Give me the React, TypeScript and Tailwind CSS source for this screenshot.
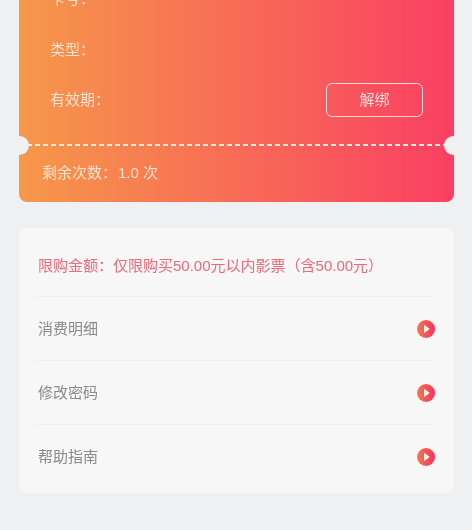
const font = { fontFamily: '"Liberation Sans", "Noto Sans CJK SC", sans-serif' };

function Arrow() {
  return (
    <svg width="18" height="18" viewBox="0 0 18 18" className="shrink-0">
      <defs>
        <linearGradient id="arrowGrad" x1="0" y1="0" x2="1" y2="0">
          <stop offset="0" stopColor="#ee7a50" />
          <stop offset="1" stopColor="#fb2f5e" />
        </linearGradient>
      </defs>
      <circle cx="9" cy="9" r="9" fill="url(#arrowGrad)" />
      <path d="M7 4.8 L12.8 9 L7 13.2 Z" fill="#fbeee8" />
    </svg>
  );
}

function Row({ label }: { label: string }) {
  return (
    <div className="flex h-[64px] items-center justify-between border-b border-[#f0f0f0] last:border-b-0">
      <span className="mt-[1px] text-[15px] text-[#8a8a8a]">{label}</span>
      <Arrow />
    </div>
  );
}

export default function App() {
  return (
    <div style={font} className="h-[530px] w-[472px] overflow-hidden bg-[#eef0f2] pl-[19px] blur-[0.4px]">
      <div className="relative -mt-[24px] h-[226px] w-[435px] overflow-hidden rounded-b-lg bg-linear-to-r/srgb from-[#f6984a] to-[#fa3f62] text-[#fbe3d2]">
        <div className="h-[168px] pl-[31px] pt-[11px] text-[15px]">
          <div className="flex h-[25px] items-center">卡号&#xFF1A;</div>
          <div className="mt-[26px] flex h-[25px] items-center">类型&#xFF1A;</div>
          <div className="mt-[25px] flex h-[24px] items-center justify-between pr-[31px]">
            <span>有效期&#xFF1A;</span>
            <button className="h-[34px] w-[97px] rounded-md border-[1.5px] border-[#fbdcd6] text-[15px] text-[#fbdcd6]">解绑</button>
          </div>
        </div>
        <div className="h-[1.5px] bg-[repeating-linear-gradient(90deg,#ffeee0_0,#ffeee0_5px,transparent_5px,transparent_8px)]" />
        <div className="flex h-[56px] items-center pl-[23px] text-[15px]">剩余次数&#xFF1A;<span className="ml-[1px]">1.0 次</span></div>
        <div className="absolute left-[-9px] top-[160px] h-[19px] w-[19px] rounded-full bg-[#eef0f2]" />
        <div className="absolute right-[-9px] top-[160px] h-[19px] w-[19px] rounded-full bg-[#eef0f2]" />
      </div>
      <div className="mt-[26px] w-[435px] rounded-lg bg-[#f7f7f7] px-[19px] pb-[4px]">
        <div className="flex h-[69px] items-start border-b border-[#f0f0f0] pt-[28px] text-[15px] leading-[20px] text-[#ea6b7c]">
          限购金额&#xFF1A;仅限购买50.00元以内影票&#xFF08;含50.00元&#xFF09;
        </div>
        <Row label="消费明细" />
        <Row label="修改密码" />
        <Row label="帮助指南" />
      </div>
    </div>
  );
}
